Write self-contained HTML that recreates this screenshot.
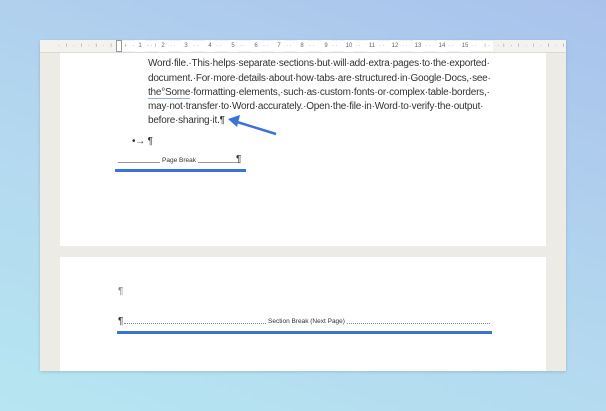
<!DOCTYPE html>
<html><head><style>
html,body{margin:0;padding:0}
body{width:606px;height:411px;overflow:hidden;position:relative;background:linear-gradient(200deg,#a9c2ec 0%,#b3d6ef 50%,#b6e6f1 100%);font-family:"Liberation Sans",sans-serif}
.win{position:absolute;left:40px;top:40px;width:526px;height:331px;background:#edebe6;overflow:hidden;box-shadow:0 1px 3px rgba(0,0,0,.15)}
.ruler{position:absolute;left:0;top:0;width:526px;height:12px;background:#f3f2ef;border-bottom:1px solid #dcdad5;font-size:6px;color:#666;line-height:12px}
.rw{position:absolute;left:80px;top:1px;width:373px;height:10px;background:#fff}
.n{position:absolute;top:0;width:10px;margin-left:-5px;text-align:center}
.tk{position:absolute;left:82px;top:0;white-space:nowrap;color:#999;letter-spacing:4.8px}
.page{position:absolute;left:20px;width:486px;background:#fff}
.t{position:absolute;left:88px;font-size:10px;color:#333;white-space:nowrap;letter-spacing:-0.22px}
</style></head><body>
<div class="win">
<div class="ruler"><div class="rw"></div>
<div style="position:absolute;left:18px;top:0;letter-spacing:5.6px;white-space:nowrap;color:#999">·ı·ı·ı·ı·ı·ı·ı·</div>
<div style="position:absolute;left:463px;top:0;letter-spacing:5.6px;white-space:nowrap;color:#999">ı·ı·ı·ı·ı·ı·ı·</div>
<div class="tk" style="left:84px">· ı · ·</div>
<div class="tk" style="left:107px">· ı · ·</div>
<div class="tk" style="left:130px">· ı · ·</div>
<div class="tk" style="left:153px">· ı · ·</div>
<div class="tk" style="left:176px">· ı · ·</div>
<div class="tk" style="left:200px">· ı · ·</div>
<div class="tk" style="left:223px">· ı · ·</div>
<div class="tk" style="left:246px">· ı · ·</div>
<div class="tk" style="left:269px">· ı · ·</div>
<div class="tk" style="left:292px">· ı · ·</div>
<div class="tk" style="left:316px">· ı · ·</div>
<div class="tk" style="left:339px">· ı · ·</div>
<div class="tk" style="left:362px">· ı · ·</div>
<div class="tk" style="left:385px">· ı · ·</div>
<div class="tk" style="left:408px">· ı · ·</div>
<div class="tk" style="left:431px">· ı · ·</div>
<span class="n" style="left:100px;background:#fff">1</span><span class="n" style="left:123px;background:#fff">2</span><span class="n" style="left:146px;background:#fff">3</span><span class="n" style="left:170px;background:#fff">4</span><span class="n" style="left:193px;background:#fff">5</span><span class="n" style="left:216px;background:#fff">6</span><span class="n" style="left:239px;background:#fff">7</span><span class="n" style="left:262px;background:#fff">8</span><span class="n" style="left:286px;background:#fff">9</span><span class="n" style="left:309px;background:#fff">10</span><span class="n" style="left:332px;background:#fff">11</span><span class="n" style="left:355px;background:#fff">12</span><span class="n" style="left:378px;background:#fff">13</span><span class="n" style="left:402px;background:#fff">14</span><span class="n" style="left:425px;background:#fff">15</span>
<div style="position:absolute;left:76px;top:0;width:6px;height:12px;border:1px solid #999;box-sizing:border-box;background:#fff"></div>
</div>
<div class="page" style="top:13px;height:193px">
<div class="t" style="top:5px">Word·file.·This·helps·separate·sections·but·will·add·extra·pages·to·the·exported·</div>
<div class="t" style="top:20px">document.·For·more·details·about·how·tabs·are·structured·in·Google·Docs,·see·</div>
<div class="t" style="top:34px"><span style="border-bottom:1px solid #8fb0e0">the°Some</span>·formatting·elements,·such·as·custom·fonts·or·complex·table·borders,·</div>
<div class="t" style="top:48px">may·not·transfer·to·Word·accurately.·Open·the·file·in·Word·to·verify·the·output·</div>
<div class="t" style="top:62px">before·sharing·it.¶</div>
<div class="t" style="top:83px;left:72px">•→ ¶</div>
<div style="position:absolute;left:58px;top:109px;width:122px;border-top:1px solid #999"></div>
<div style="position:absolute;left:100px;top:104px;background:#fff;font-size:6.5px;color:#333;padding:0 2px">Page Break</div>
<div style="position:absolute;left:176px;top:101px;font-size:10px;color:#333">¶</div>
<div style="position:absolute;left:55px;top:116px;width:131px;height:3px;background:#3a72d6"></div>
<svg style="position:absolute;left:166px;top:60px" width="60" height="24"><line x1="50" y1="21" x2="8" y2="8" stroke="#3a72d6" stroke-width="2.5"/><polygon points="2,6 14,2 11,14" fill="#3a72d6"/></svg>
</div>
<div class="page" style="top:217px;height:120px">
<div style="position:absolute;left:58px;top:29px;font-size:10px;color:#888">¶</div>
<div style="position:absolute;left:58px;top:59px;font-size:10px;color:#333">¶</div>
<div style="position:absolute;left:64px;top:66px;width:366px;border-top:1px dotted #888"></div>
<div style="position:absolute;left:206px;top:61px;background:#fff;font-size:6.5px;color:#333;padding:0 2px">Section Break (Next Page)</div>
<div style="position:absolute;left:57px;top:74px;width:375px;height:3px;background:#3a72d6"></div>
</div>
</div>
</body></html>
